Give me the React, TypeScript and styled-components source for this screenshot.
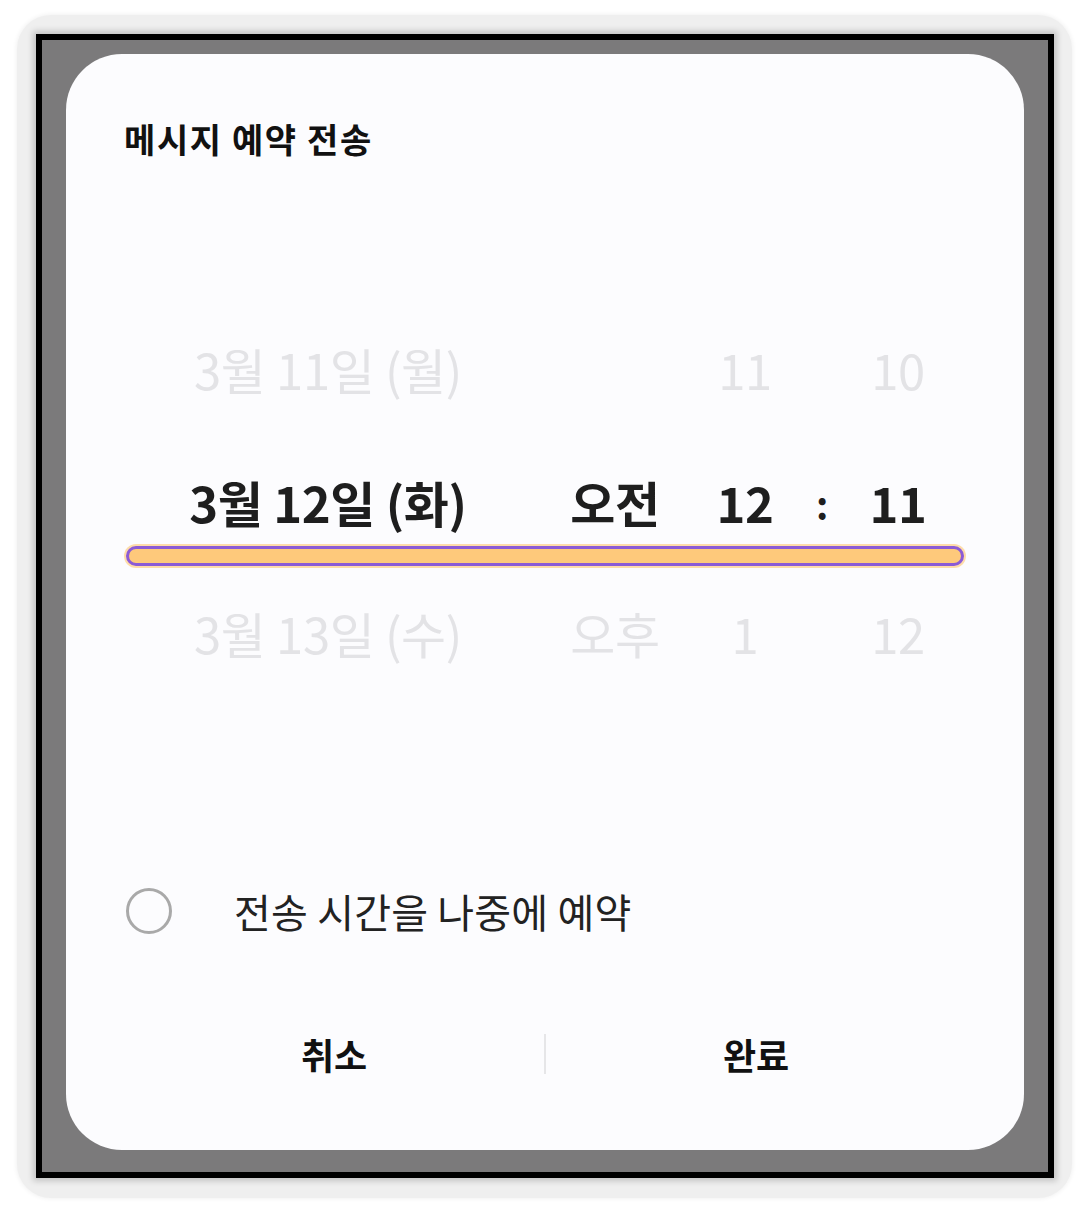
import React from 'react';
import styled, { createGlobalStyle } from 'styled-components';

const GlobalStyle = createGlobalStyle`
  html, body {
    margin: 0;
    padding: 0;
    background: #ffffff;
  }
  body {
    font-family: "Noto Sans CJK KR", "Noto Sans", sans-serif;
  }
`;

const Page = styled.div`
  width: 1090px;
  height: 1216px;
  padding: 15px 0 0 17px;
  box-sizing: border-box;
`;

const Halo = styled.div`
  width: 1055px;
  height: 1183px;
  padding: 19px 18px 0 19px;
  box-sizing: border-box;
  border-radius: 34px;
  background: #efefef;
  box-shadow: 0 0 4px 1px #f2f2f2;
`;

const Frame = styled.div`
  width: 1018px;
  height: 1144px;
  box-sizing: border-box;
  border: 6px solid #000;
  background: #7b7a7b;
  padding: 14px 24px 22px 24px;
  box-shadow: 0 0 6px 3px rgba(0, 0, 0, 0.18);
`;

const Card = styled.div`
  height: 100%;
  background: #fcfcfe;
  border-radius: 56px;
  padding: 0 58px;
  box-sizing: border-box;
  display: flex;
  flex-direction: column;
`;

const Title = styled.h2`
  margin: 0;
  padding-top: 62px;
  height: 46px;
  line-height: 46px;
  font-size: 34px;
  font-weight: 700;
  color: #111;
  letter-spacing: 1.6px;
`;

const Picker = styled.div`
  margin-top: 156px;
  display: flex;
  flex-direction: column;
`;

const Row = styled.div<{ $selected?: boolean; $h: number }>`
  display: grid;
  grid-template-columns: 408px 166px 94px 60px 92px;
  height: ${p => p.$h}px;
  align-items: center;
  justify-items: center;
  font-size: 49px;
  font-weight: ${p => (p.$selected ? 700 : 400)};
  color: ${p => (p.$selected ? '#1e1e1e' : '#e3e3e6')};
  letter-spacing: -0.4px;
  white-space: nowrap;
`;

const Colon = styled.span`
  font-size: 38px;
  font-weight: 700;
  transform: translateY(2px);
`;

const Bar = styled.div`
  height: 14px;
  margin: 2px 2px 0;
  border: 3px solid #8b5bd6;
  border-radius: 10px;
  background: #fec97b;
  box-shadow: 0 0 0 2px #fedcaa;
`;

const Spacer = styled.div<{ $h: number }>`
  height: ${p => p.$h}px;
`;

const Option = styled.label`
  display: flex;
  align-items: center;
  height: 60px;
  margin-top: 199px;
  font-size: 40px;
  color: #222;
  letter-spacing: 0.2px;
`;

const Radio = styled.span`
  width: 46px;
  height: 46px;
  border: 3px solid #a9a9a9;
  border-radius: 50%;
  box-sizing: border-box;
  margin-left: 2px;
  margin-right: 62px;
  flex: none;
`;

const Actions = styled.div`
  margin-top: 83px;
  display: grid;
  grid-template-columns: 1fr 2px 1fr;
  align-items: center;
  height: 60px;
`;

const ActionButton = styled.button`
  border: none;
  background: none;
  font-family: inherit;
  font-size: 36px;
  font-weight: 700;
  color: #111;
  padding: 0;
  cursor: pointer;
`;

const Divider = styled.span`
  width: 2px;
  height: 40px;
  background: #e6e6e8;
`;

type PickerRow = [string, string, string, string];

const rows: PickerRow[] = [
  ['3월 11일 (월)', '', '11', '10'],
  ['3월 12일 (화)', '오전', '12', '11'],
  ['3월 13일 (수)', '오후', '1', '12'],
];

const renderCells = (r: PickerRow, selected: boolean) => (
  <>
    <span>{r[0]}</span>
    <span>{r[1]}</span>
    <span>{r[2]}</span>
    {selected ? <Colon>:</Colon> : <span />}
    <span>{r[3]}</span>
  </>
);

const App: React.FC = () => {
  return (
    <>
      <GlobalStyle />
      <Page>
        <Halo>
          <Frame>
            <Card>
              <Title>메시지 예약 전송</Title>

              <Picker>
                <Row $h={100}>{renderCells(rows[0], false)}</Row>
                <Spacer $h={40} />
                <Row $h={86} $selected>{renderCells(rows[1], true)}</Row>
                <Bar />
                <Spacer $h={16} />
                <Row $h={100}>{renderCells(rows[2], false)}</Row>
              </Picker>

              <Option>
                <Radio />
                전송 시간을 나중에 예약
              </Option>

              <Actions>
                <ActionButton>취소</ActionButton>
                <Divider />
                <ActionButton>완료</ActionButton>
              </Actions>
            </Card>
          </Frame>
        </Halo>
      </Page>
    </>
  );
};

export default App;
